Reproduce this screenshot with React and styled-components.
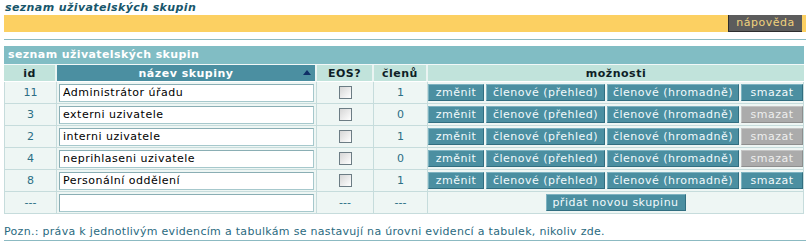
import styled, { createGlobalStyle } from 'styled-components'

const GlobalStyle = createGlobalStyle`
  body {
    margin: 0;
    background: #FFFFFF;
    font-family: "DejaVu Sans", Verdana, sans-serif;
    font-size: 11px;
    color: #000000;
  }
`

const Page = styled.div`
  padding-left: 4px;
  width: 802px;
`

const Title = styled.h1`
  margin: 0;
  padding-left: 1px;
  height: 15px;
  line-height: 16px;
  font-size: 11px;
  font-weight: bold;
  font-style: italic;
  letter-spacing: 0.4px;
  color: #17566B;
`

const Bar = styled.div`
  display: flex;
  justify-content: flex-end;
  height: 17px;
  background: #FCD062;
`

const HelpBtn = styled.div`
  width: 74px;
  margin-right: 4px;
  box-sizing: border-box;
  background: #5C5C5C;
  border-left: 1px solid #2E2E2E;
  border-bottom: 1px solid #2E2E2E;
  color: #F0D27C;
  line-height: 16px;
  text-align: center;
  letter-spacing: 0.5px;
`

const Rule = styled.div`
  height: 1px;
  margin-top: ${p => p.top}px;
  background: #8CBAC2;
`

const Table = styled.table`
  margin-top: 6px;
  width: 800px;
  border-collapse: separate;
  border-spacing: 0;
  table-layout: fixed;
`

const Caption = styled.caption`
  height: 18px;
  padding: 0 4px;
  line-height: 18px;
  text-align: left;
  background: #81BDC4;
  color: #FFFFFF;
  font-weight: bold;
  letter-spacing: 0.4px;
  border-bottom: 1px solid #F2F8F8;
`

const Th = styled.th`
  position: relative;
  height: 16px;
  padding: 0;
  background: ${p => (p.dark ? '#4B8FA1' : '#C1E3DB')};
  color: ${p => (p.dark ? '#FFFFFF' : '#0E1E26')};
  font-size: 11px;
  font-weight: bold;
  letter-spacing: 0.5px;
  text-align: center;
  border-right: ${p => (p.last ? 'none' : '2px solid #EAF4F2')};
  border-bottom: 1px solid #FFFFFF;
`

const SortArrow = styled.svg`
  position: absolute;
  right: 4px;
  top: 5px;
`

const Td = styled.td`
  height: 21px;
  padding: ${p => (p.pad ? '0 2px' : '0')};
  background: #EEF6F4;
  color: #2B6E84;
  text-align: center;
  border-right: 1px solid #C6DCDC;
  border-bottom: 1px solid #C6DCDC;
  &:first-child {
    border-left: 1px solid #C6DCDC;
  }
`

const NameInput = styled.input`
  display: block;
  width: 100%;
  height: 18px;
  box-sizing: border-box;
  margin: 0;
  padding: 0 3px;
  border: 1px solid #A6C8CC;
  border-top-color: #8AAEB4;
  border-left-color: #8AAEB4;
  background: #FFFFFF;
  font-family: "DejaVu Sans", Verdana, sans-serif;
  font-size: 11px;
  letter-spacing: 0.5px;
  color: #000000;
  outline: none;
`

const Check = styled.span`
  display: inline-block;
  vertical-align: middle;
  width: 13px;
  height: 13px;
  box-sizing: border-box;
  border: 1px solid #6C7C84;
  background: linear-gradient(135deg, #D6D6D6, #FFFFFF);
`

const Actions = styled.div`
  display: flex;
  gap: 2px;
  justify-content: ${p => (p.center ? 'center' : 'flex-start')};
`

const Btn = styled.div`
  width: ${p => p.w}px;
  height: 17px;
  box-sizing: border-box;
  background: ${p => (p.off ? '#ABABAB' : '#4B8FA1')};
  color: ${p => (p.off ? '#EEEEEE' : '#F2FAFC')};
  border: 1px solid;
  border-color: ${p => (p.off ? '#C4C4C4 #8E8E8E #8E8E8E #C4C4C4' : '#7DB2C0 #316E80 #316E80 #7DB2C0')};
  line-height: 15px;
  text-align: center;
  letter-spacing: 0.5px;
  white-space: nowrap;
`

const Note = styled.p`
  margin: 0;
  padding-top: 11px;
  line-height: 13px;
  color: #2A6A80;
  letter-spacing: 0.3px;
`

const groups = [
  { id: 11, name: 'Administrátor úřadu', count: 1, canDelete: true },
  { id: 3, name: 'externi uzivatele', count: 0, canDelete: false },
  { id: 2, name: 'interni uzivatele', count: 1, canDelete: false },
  { id: 4, name: 'neprihlaseni uzivatele', count: 0, canDelete: false },
  { id: 8, name: 'Personální oddělení', count: 1, canDelete: true },
]

const App = () => {
  return (
    <Page>
      <GlobalStyle />
      <Title>seznam uživatelských skupin</Title>
      <Bar>
        <HelpBtn>nápověda</HelpBtn>
      </Bar>
      <Rule top={7} />

      <Table>
        <Caption>seznam uživatelských skupin</Caption>
        <colgroup>
          <col style={{ width: 53 }} />
          <col style={{ width: 260 }} />
          <col style={{ width: 57 }} />
          <col style={{ width: 54 }} />
          <col />
        </colgroup>
        <thead>
          <tr>
            <Th>id</Th>
            <Th dark>
              název skupiny
              <SortArrow width="8" height="5" viewBox="0 0 8 5">
                <path d="M0 5 L4 0 L8 5 Z" fill="#0F2F66" />
              </SortArrow>
            </Th>
            <Th>EOS?</Th>
            <Th>členů</Th>
            <Th last>možnosti</Th>
          </tr>
        </thead>
        <tbody>
          {groups.map(g => (
            <tr key={g.id}>
              <Td>{g.id}</Td>
              <Td pad><NameInput defaultValue={g.name} /></Td>
              <Td><Check /></Td>
              <Td>{g.count}</Td>
              <Td>
                <Actions>
                  <Btn w={56}>změnit</Btn>
                  <Btn w={119}>členové (přehled)</Btn>
                  <Btn w={132}>členové (hromadně)</Btn>
                  <Btn w={62} off={!g.canDelete}>smazat</Btn>
                </Actions>
              </Td>
            </tr>
          ))}
          <tr>
            <Td>---</Td>
            <Td pad><NameInput defaultValue="" /></Td>
            <Td>---</Td>
            <Td>---</Td>
            <Td>
              <Actions center>
                <Btn w={140}>přidat novou skupinu</Btn>
              </Actions>
            </Td>
          </tr>
        </tbody>
      </Table>

      <Note>Pozn.: práva k jednotlivým evidencím a tabulkám se nastavují na úrovni evidencí a tabulek, nikoliv zde.</Note>
      <Rule top={2} />
    </Page>
  )
}

export default App
